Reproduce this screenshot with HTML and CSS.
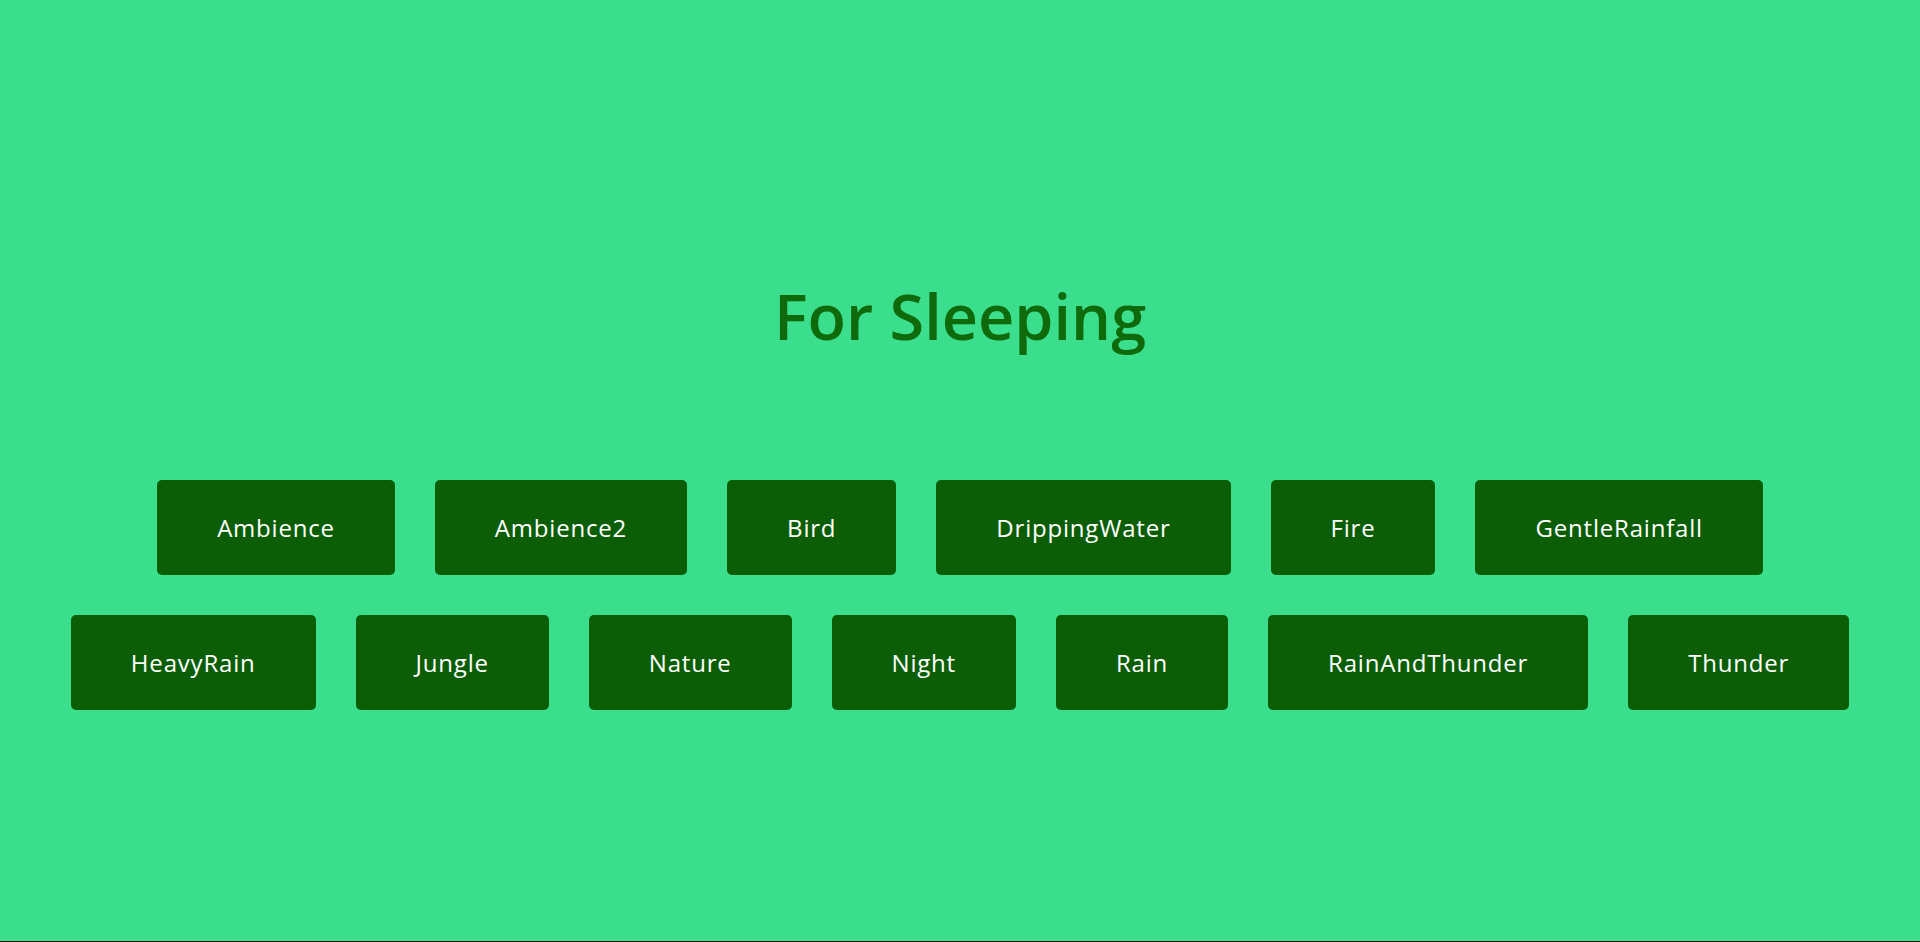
FILE: index.html
```html
<!DOCTYPE html>
<html lang="en">
<head>
<meta charset="utf-8">
<title>For Sleeping</title>
<link rel="stylesheet" href="styles.css">
</head>
<body>
<main class="page">
  <h1 class="title">For Sleeping</h1>
  <div class="sounds">
    <button class="sound">Ambience</button>
    <button class="sound">Ambience2</button>
    <button class="sound">Bird</button>
    <button class="sound">DrippingWater</button>
    <button class="sound">Fire</button>
    <button class="sound">GentleRainfall</button>
    <button class="sound">HeavyRain</button>
    <button class="sound">Jungle</button>
    <button class="sound">Nature</button>
    <button class="sound">Night</button>
    <button class="sound">Rain</button>
    <button class="sound">RainAndThunder</button>
    <button class="sound">Thunder</button>
  </div>
</main>
</body>
</html>
```

FILE: styles.css
```css
html, body {
  margin: 0;
  padding: 0;
  background: #111;
}

.page {
  box-sizing: border-box;
  height: 941px;
  padding-top: 277px;
  background: #3ade8c;
  display: flex;
  flex-direction: column;
  align-items: center;
  font-family: "Open Sans", "Liberation Sans", sans-serif;
}

.title {
  margin: 0 0 106px;
  font-size: 63px;
  line-height: 77px;
  font-weight: 600;
  color: #0e6a0a;
}

.sounds {
  width: 1880px;
  display: flex;
  flex-wrap: wrap;
  justify-content: center;
}

.sound {
  margin: 20px;
  padding: 30px 60px;
  border: 0;
  border-radius: 5px;
  background: #0b5e05;
  color: #ffffff;
  font-family: inherit;
  font-size: 24px;
  line-height: 35px;
  letter-spacing: 0.8px;
  cursor: pointer;
}
```
